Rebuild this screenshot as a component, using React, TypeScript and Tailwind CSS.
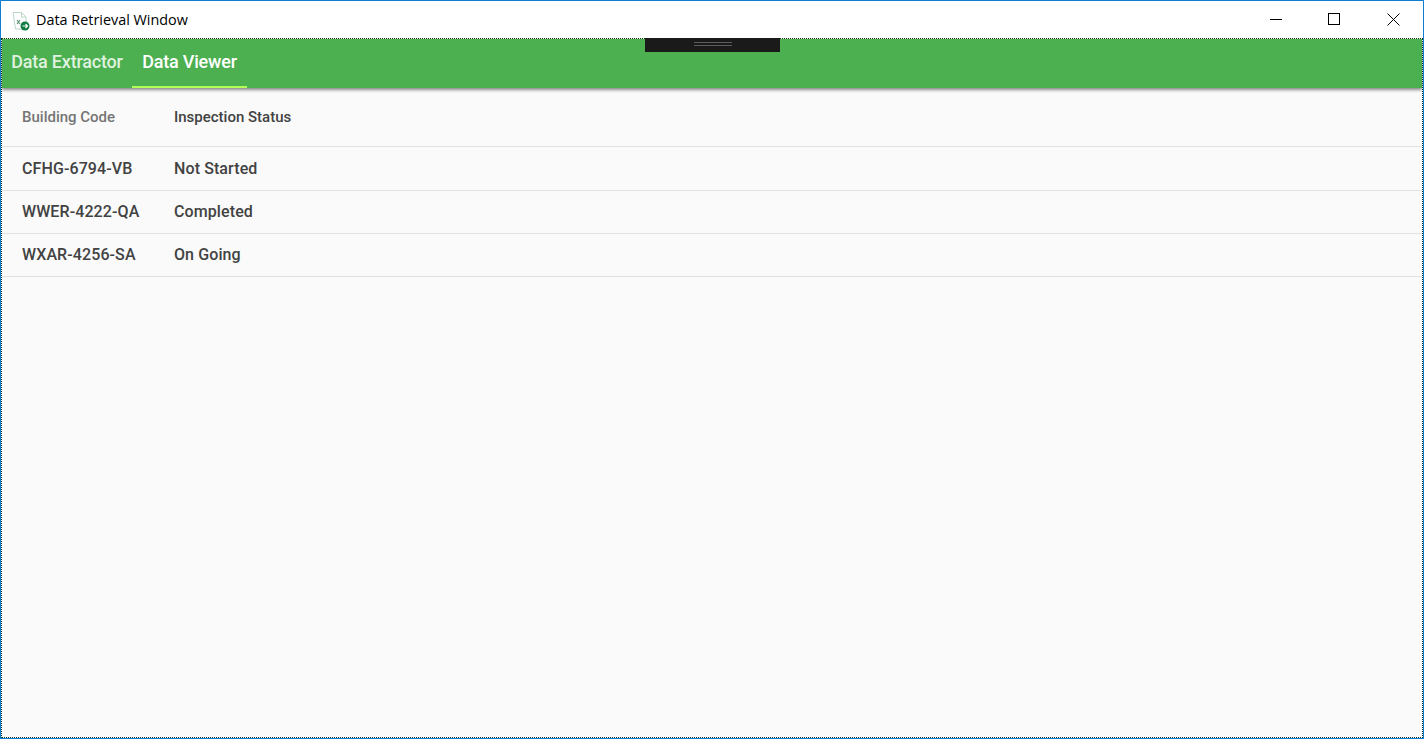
const rows = [
  { code: "CFHG-6794-VB", status: "Not Started" },
  { code: "WWER-4222-QA", status: "Completed" },
  { code: "WXAR-4256-SA", status: "On Going" },
];

function AppIcon() {
  return (
    <svg width="18" height="19" viewBox="0 0 18 19" fill="none" className="mt-[2px]">
      <path d="M1 0.500h8.500l4.500 4.500v9l-3 3h-7.500z" fill="#fff" stroke="#b9d6c6" strokeWidth="1" />
      <path d="M9.500 0.500v4.500h4.500" stroke="#b9d6c6" strokeWidth="1" />
      <path d="M5 8l3 4M8 8l-3 4" stroke="#5d8f73" strokeWidth="1.200" />
      <circle cx="13" cy="14" r="4.500" fill="#107c41" />
      <path d="M10.500 14h5M13.500 12l2 2-2 2" stroke="#fff" strokeWidth="1.200" />
    </svg>
  );
}

export default function App() {
  return (
    <div className="flex h-[739px] w-[1424px] flex-col overflow-hidden border border-[#0f7fd6] bg-[#fafafa] font-['Roboto',sans-serif]">
      <div className="flex h-[37px] shrink-0 items-center bg-white pl-[11px] pt-[1px]">
        <AppIcon />
        <span className="ml-[6px] font-['Open_Sans','Noto_Sans',sans-serif] text-[14.4px] text-black">
          Data Retrieval Window
        </span>
        <div className="ml-auto flex items-center">
          <div className="flex w-[58px] justify-center pb-[2px] pr-[1px]">
            <svg width="12" height="12" viewBox="0 0 12 12">
              <path d="M0 6.500h12" stroke="#000" strokeWidth="1" />
            </svg>
          </div>
          <div className="flex w-[58px] justify-center pb-[2px]">
            <div className="h-[12px] w-[12px] border border-black" />
          </div>
          <div className="flex w-[60px] justify-center pb-[2px]">
            <svg width="13" height="13" viewBox="0 0 13 13">
              <path d="M0.500 0.500l12 12M12.500 0.500l-12 12" stroke="#000" strokeWidth="1" />
            </svg>
          </div>
        </div>
      </div>

      <div className="flex flex-1 flex-col border border-dotted border-[#16351c]">
        <div className="relative flex h-[49px] shrink-0 items-stretch bg-[#4caf50] shadow-[0_2px_3px_rgba(0,0,0,0.45)]">
          <div className="flex w-[130px] items-center justify-center pb-[5px] text-[18px] font-medium tracking-[-0.2px] text-[#dff2df]">
            Data Extractor
          </div>
          <div className="flex w-[115px] items-center justify-center border-b-2 border-[#b2ff59] pb-[3px] text-[18px] font-medium tracking-[-0.2px] text-white">
            Data Viewer
          </div>
          <div className="absolute left-[643px] top-[-1px] flex h-[14px] w-[135px] justify-center bg-[#1a1a1a] pt-[4px]">
            <div className="h-[4px] w-[38px] border-y border-[#5c5c5c]" />
          </div>
        </div>

        <div className="flex h-[59px] shrink-0 items-start border-b border-[#e0e0e0] pl-[20px] pt-[18px] text-[15px] font-medium">
          <span className="w-[152px] text-[#757575]">Building Code</span>
          <span className="text-[#424242]">Inspection Status</span>
        </div>
        <div className="pt-[1px]">
          {rows.map((row) => (
            <div
              key={row.code}
              className="flex h-[43px] items-center border-b border-[#e0e0e0] pl-[20px] text-[16px] font-medium tracking-[0.1px] text-[#424242]"
            >
              <span className="w-[152px]">{row.code}</span>
              <span>{row.status}</span>
            </div>
          ))}
        </div>
      </div>
    </div>
  );
}
